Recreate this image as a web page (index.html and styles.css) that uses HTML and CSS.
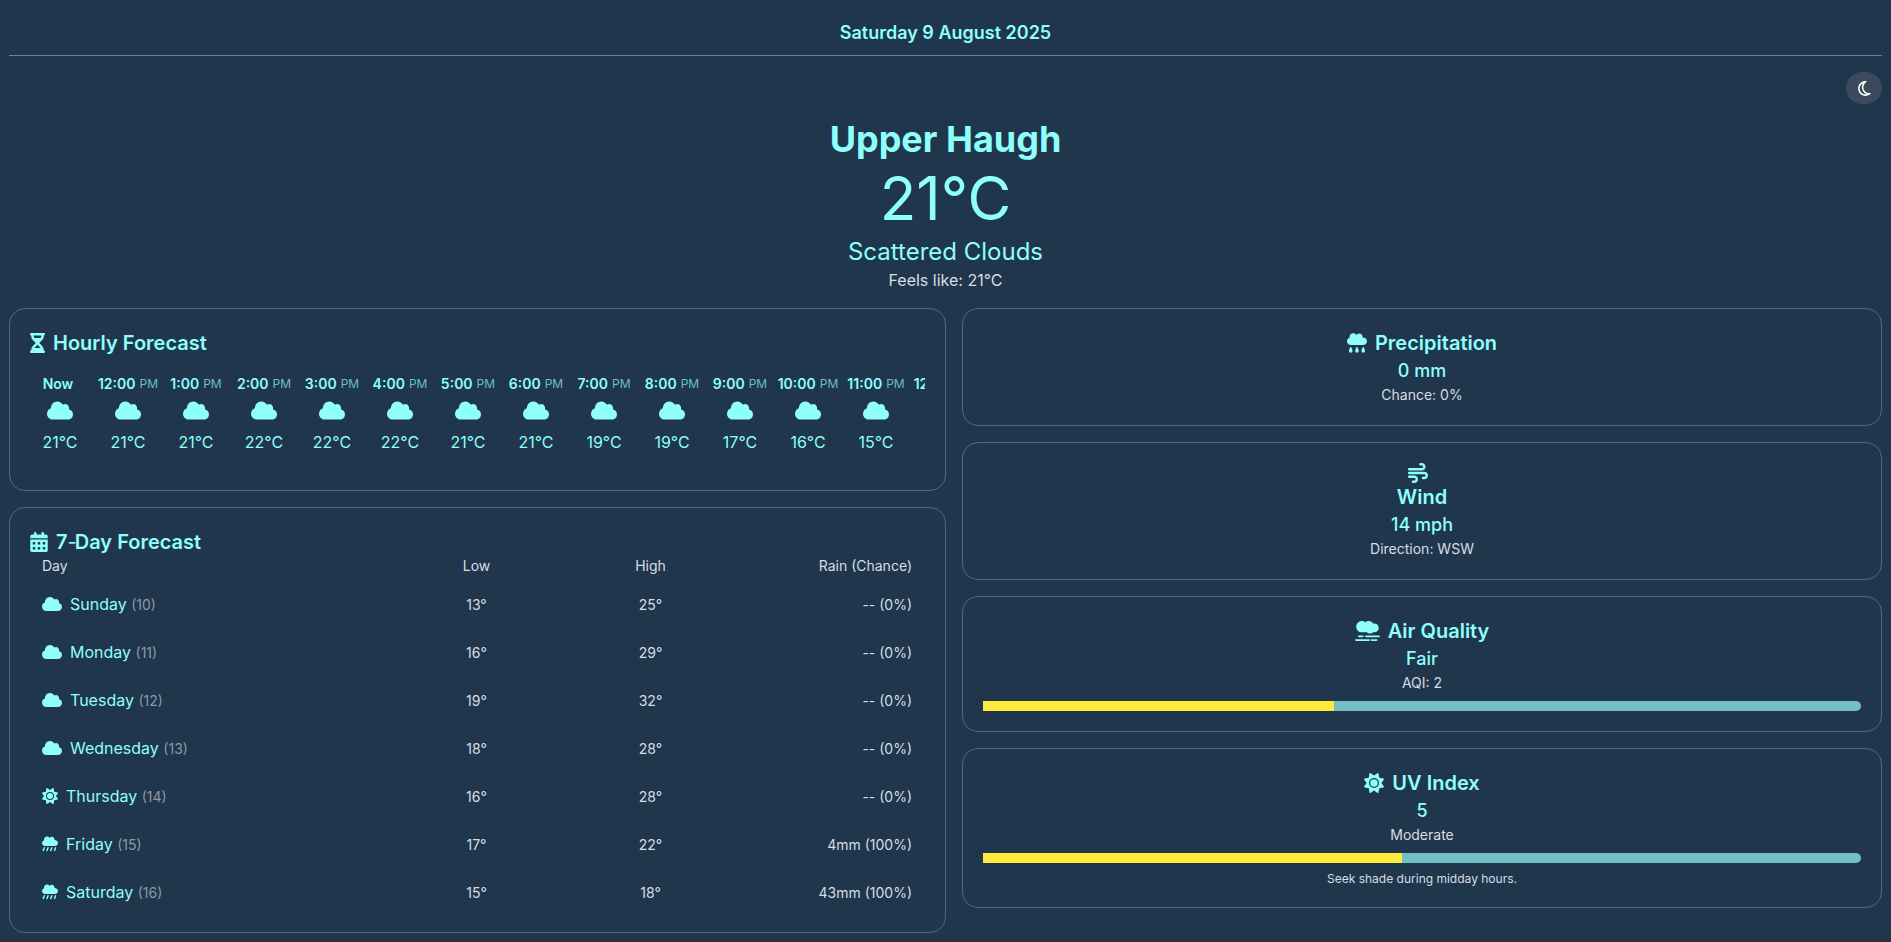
FILE: index.html
```html
<!DOCTYPE html>
<html lang="en">
<head>
<meta charset="utf-8">
<title>Weather</title>
<link rel="stylesheet" href="styles.css">
</head>
<body>
<svg class="defs" width="0" height="0" aria-hidden="true">
  <symbol id="i-cloud" viewBox="0 0 640 512"><path fill="currentColor" d="M0 336c0 79.500 64.500 144 144 144H512c70.700 0 128-57.300 128-128c0-61.900-44-113.600-102.400-125.400c4.100-10.700 6.400-22.400 6.400-34.600c0-53-43-96-96-96c-19.700 0-38.100 6-53.300 16.200C367 64.200 315.300 32 256 32C167.600 32 96 103.600 96 192c0 2.700 .1 5.400 .2 8.100C40.200 219.800 0 273.200 0 336z"/></symbol>
  <symbol id="i-sun" viewBox="0 0 512 512"><path fill="currentColor" d="M361.500 1.200c5 2.100 8.600 6.600 9.600 11.900L391 121l107.900 19.800c5.300 1 9.800 4.600 11.900 9.600s1.500 10.700-1.600 15.200L446.900 256l62.300 90.300c3.100 4.500 3.700 10.200 1.600 15.200s-6.600 8.600-11.900 9.600L391 391 371.100 498.900c-1 5.300-4.600 9.800-9.600 11.900s-10.700 1.500-15.200-1.600L256 446.900l-90.300 62.300c-4.500 3.100-10.200 3.700-15.200 1.600s-8.600-6.600-9.600-11.900L121 391 13.100 371.100c-5.300-1-9.800-4.600-11.900-9.600s-1.500-10.700 1.600-15.200L65.100 256 2.800 165.700c-3.100-4.500-3.700-10.200-1.600-15.200s6.600-8.600 11.900-9.600L121 121 140.900 13.100c1-5.300 4.600-9.800 9.600-11.900s10.700-1.500 15.200 1.600L256 65.100 346.300 2.800c4.500-3.100 10.200-3.700 15.200-1.600zM160 256a96 96 0 1 1 192 0 96 96 0 1 1 -192 0zm224 0a128 128 0 1 0 -256 0 128 128 0 1 0 256 0z"/></symbol>
  <symbol id="i-rain" viewBox="0 0 512 512"><path fill="currentColor" d="M96 320c-53 0-96-43-96-96c0-42.500 27.600-78.500 65.900-91.100C64.700 126.700 64 120.400 64 114c0-53 43-96 96-96c33.800 0 63.500 17.500 80.600 43.900C256.500 39.700 282.700 24 312 24c48.600 0 88 39.400 88 88c0 4.500-.3 8.900-1 13.200c2.300-.1 4.600-.2 7-.2c58.500 0 106 43 106 97.500S464.500 320 416 320H96zM81.500 353.700c12.100 4.500 18.300 18 13.800 30.200L62.500 471.700c-4.500 12.100-18 18.300-30.200 13.800s-18.300-18-13.800-30.200l32.800-87.800c4.500-12.100 18-18.300 30.200-13.800zm120 0c12.100 4.500 18.300 18 13.800 30.200l-32.800 87.800c-4.500 12.100-18 18.300-30.200 13.800s-18.300-18-13.800-30.200l32.800-87.800c4.500-12.100 18-18.300 30.200-13.800zm120 0c12.100 4.500 18.300 18 13.800 30.200l-32.800 87.800c-4.500 12.100-18 18.300-30.200 13.800s-18.300-18-13.800-30.200l32.800-87.800c4.500-12.100 18-18.300 30.200-13.800zm120 0c12.100 4.500 18.300 18 13.800 30.200l-32.800 87.800c-4.500 12.100-18 18.300-30.200 13.800s-18.300-18-13.800-30.200l32.800-87.800c4.500-12.100 18-18.300 30.200-13.800z"/></symbol>
  <symbol id="i-precip" viewBox="0 0 512 512"><path fill="currentColor" d="M96 310c-53 0-96-43-96-96c0-42.500 27.600-78.500 65.900-91.100C64.700 116.700 64 110.400 64 104c0-53 43-96 96-96c33.800 0 63.500 17.500 80.600 43.900C256.500 29.700 282.700 14 312 14c48.600 0 88 39.400 88 88c0 4.500-.3 8.900-1 13.200c2.300-.1 4.600-.2 7-.2c58.500 0 106 43 106 97.500S464.500 310 416 310H96zM50 462c0-30 36-108 46-108s46 78 46 108a46 46 0 0 1-92 0zm160 0c0-30 36-108 46-108s46 78 46 108a46 46 0 0 1-92 0zm160 0c0-30 36-108 46-108s46 78 46 108a46 46 0 0 1-92 0z"/></symbol>
  <symbol id="i-wind" viewBox="0 0 512 512"><path fill="currentColor" d="M288 32c0 17.700 14.300 32 32 32h32c17.700 0 32 14.300 32 32s-14.300 32-32 32H32c-17.700 0-32 14.300-32 32s14.300 32 32 32H352c53 0 96-43 96-96s-43-96-96-96H320c-17.700 0-32 14.300-32 32zm64 352c0 17.700 14.300 32 32 32h32c53 0 96-43 96-96s-43-96-96-96H32c-17.700 0-32 14.300-32 32s14.300 32 32 32H416c17.700 0 32 14.300 32 32s-14.300 32-32 32H384c-17.700 0-32 14.300-32 32zM128 512h32c53 0 96-43 96-96s-43-96-96-96H32c-17.700 0-32 14.300-32 32s14.300 32 32 32H160c17.700 0 32 14.300 32 32s-14.300 32-32 32H128c-17.700 0-32 14.300-32 32s14.300 32 32 32z"/></symbol>
  <symbol id="i-smog" viewBox="0 0 640 512"><path fill="currentColor" d="M32 144c0 79.500 64.500 144 144 144H299.300c22.600 19.900 52.200 32 84.700 32s62.100-12.100 84.700-32H496c61.900 0 112-50.100 112-112s-50.100-112-112-112c-10.700 0-21 1.500-30.800 4.300C443.800 27.700 401.100 0 352 0c-32.600 0-62.400 12.200-85.100 32.300C242.100 12.100 210.500 0 176 0C96.500 0 32 64.500 32 144zM616 368H280c-13.300 0-24 10.700-24 24s10.700 24 24 24H616c13.300 0 24-10.700 24-24s-10.700-24-24-24zm-64 96H424c-13.300 0-24 10.700-24 24s10.700 24 24 24H552c13.300 0 24-10.700 24-24s-10.700-24-24-24zm-192 0H24c-13.300 0-24 10.700-24 24s10.700 24 24 24H360c13.300 0 24-10.700 24-24s-10.700-24-24-24zM224 392c0-13.300-10.700-24-24-24H96c-13.300 0-24 10.700-24 24s10.700 24 24 24H200c13.300 0 24-10.700 24-24z"/></symbol>
  <symbol id="i-hourglass" viewBox="0 0 384 512"><path fill="currentColor" d="M32 0C14.300 0 0 14.300 0 32S14.300 64 32 64V75c0 42.400 16.900 83.100 46.900 113.100L146.700 256 78.900 323.900C48.900 353.900 32 394.600 32 437v11c-17.700 0-32 14.300-32 32s14.300 32 32 32H64 320h32c17.700 0 32-14.300 32-32s-14.300-32-32-32V437c0-42.400-16.900-83.100-46.900-113.100L237.300 256l67.900-67.900c30-30 46.900-70.700 46.900-113.100V64c17.700 0 32-14.300 32-32s-14.300-32-32-32H320 64 32zM96 75V64H288V75c0 19-5.600 37.400-16 53H112c-10.300-15.600-16-34-16-53zm16 309c3.500-5.300 7.600-10.300 12.100-14.900L192 301.300l67.900 67.900c4.600 4.600 8.600 9.600 12.100 14.900H112z"/></symbol>
  <symbol id="i-calendar" viewBox="0 0 448 512"><path fill="currentColor" d="M128 0c17.700 0 32 14.300 32 32V64H288V32c0-17.700 14.300-32 32-32s32 14.300 32 32V64h48c26.500 0 48 21.500 48 48v48H0V112C0 85.500 21.500 64 48 64H96V32c0-17.700 14.300-32 32-32zM0 192H448V464c0 26.500-21.500 48-48 48H48c-26.500 0-48-21.500-48-48V192zm64 80v32c0 8.800 7.200 16 16 16h32c8.800 0 16-7.200 16-16V272c0-8.800-7.200-16-16-16H80c-8.800 0-16 7.200-16 16zm128 0v32c0 8.800 7.200 16 16 16h32c8.800 0 16-7.200 16-16V272c0-8.800-7.200-16-16-16H208c-8.800 0-16 7.200-16 16zm144-16c-8.800 0-16 7.200-16 16v32c0 8.800 7.200 16 16 16h32c8.800 0 16-7.200 16-16V272c0-8.800-7.200-16-16-16H336zM64 400v32c0 8.800 7.200 16 16 16h32c8.800 0 16-7.200 16-16V400c0-8.800-7.200-16-16-16H80c-8.800 0-16 7.200-16 16zm144-16c-8.800 0-16 7.200-16 16v32c0 8.800 7.200 16 16 16h32c8.800 0 16-7.200 16-16V400c0-8.800-7.200-16-16-16H208zm112 16v32c0 8.800 7.200 16 16 16h32c8.800 0 16-7.200 16-16V400c0-8.800-7.200-16-16-16H336c-8.800 0-16 7.200-16 16z"/></symbol>
  <symbol id="i-moon" viewBox="0 0 384 512"><path fill="currentColor" d="M144.700 98.700c-21 34.100-33.100 74.300-33.100 117.300c0 98 62.800 181.200 150.100 211.800c-12.400 2.800-25.300 4.300-38.600 4.300C126.600 432 48 353.300 48 256c0-68.900 39.400-128.400 96.800-157.300zm62.100-66C91.100 41.200 0 137.900 0 256C0 379.700 100 480 223.500 480c47.800 0 92-15 128.300-40.600c1.900-1.300 3.700-2.700 5.500-4c4.800-3.600 9.400-7.400 13.900-11.400c2.700-2.400 5.300-4.800 7.900-7.300c5-4.900 6.300-12.500 3.100-18.700s-10.100-9.700-17-8.500c-3.700 .6-7.400 1.200-11.100 1.600c-5 .5-10.100 .9-15.300 1c-1.200 0-2.500 0-3.700 0c-.1 0-.2 0-.3 0c-96.800-.2-175.200-78.900-175.200-176c0-54.800 24.900-103.700 64.100-136c1-.9 2.100-1.700 3.200-2.600c4-3.200 8.200-6.200 12.500-9c3.100-2 6.300-4 9.600-5.800c6.100-3.500 9.200-10.500 7.700-17.300s-7.300-11.900-14.300-12.500c-3.600-.3-7.100-.5-10.700-.6c-2.700-.1-5.500-.1-8.200-.1c-3.300 0-6.500 .1-9.700 .2z"/></symbol>
</svg>

<header class="date-bar"><span>Saturday 9 August 2025</span></header>

<div class="toggle-row">
  <button class="toggle" type="button" aria-label="Toggle theme"><svg class="moon"><use href="#i-moon"/></svg></button>
</div>

<section class="hero">
  <h1>Upper Haugh</h1>
  <div class="temp">21°C</div>
  <div class="cond">Scattered Clouds</div>
  <div class="feels">Feels like: 21°C</div>
</section>

<main class="grid">
  <div class="col">
    <section class="card hourly">
      <h2 class="title"><svg class="ic ic-hour"><use href="#i-hourglass"/></svg>Hourly Forecast</h2>
      <div class="hours">
        <div class="hour"><div class="h-time">Now <small></small></div><svg class="h-ic"><use href="#i-cloud"/></svg><div class="h-temp">21°C</div></div>
        <div class="hour"><div class="h-time">12:00 <small>PM</small></div><svg class="h-ic"><use href="#i-cloud"/></svg><div class="h-temp">21°C</div></div>
        <div class="hour"><div class="h-time">1:00 <small>PM</small></div><svg class="h-ic"><use href="#i-cloud"/></svg><div class="h-temp">21°C</div></div>
        <div class="hour"><div class="h-time">2:00 <small>PM</small></div><svg class="h-ic"><use href="#i-cloud"/></svg><div class="h-temp">22°C</div></div>
        <div class="hour"><div class="h-time">3:00 <small>PM</small></div><svg class="h-ic"><use href="#i-cloud"/></svg><div class="h-temp">22°C</div></div>
        <div class="hour"><div class="h-time">4:00 <small>PM</small></div><svg class="h-ic"><use href="#i-cloud"/></svg><div class="h-temp">22°C</div></div>
        <div class="hour"><div class="h-time">5:00 <small>PM</small></div><svg class="h-ic"><use href="#i-cloud"/></svg><div class="h-temp">21°C</div></div>
        <div class="hour"><div class="h-time">6:00 <small>PM</small></div><svg class="h-ic"><use href="#i-cloud"/></svg><div class="h-temp">21°C</div></div>
        <div class="hour"><div class="h-time">7:00 <small>PM</small></div><svg class="h-ic"><use href="#i-cloud"/></svg><div class="h-temp">19°C</div></div>
        <div class="hour"><div class="h-time">8:00 <small>PM</small></div><svg class="h-ic"><use href="#i-cloud"/></svg><div class="h-temp">19°C</div></div>
        <div class="hour"><div class="h-time">9:00 <small>PM</small></div><svg class="h-ic"><use href="#i-cloud"/></svg><div class="h-temp">17°C</div></div>
        <div class="hour"><div class="h-time">10:00 <small>PM</small></div><svg class="h-ic"><use href="#i-cloud"/></svg><div class="h-temp">16°C</div></div>
        <div class="hour"><div class="h-time">11:00 <small>PM</small></div><svg class="h-ic"><use href="#i-cloud"/></svg><div class="h-temp">15°C</div></div>
        <div class="hour"><div class="h-time">12:00 <small>AM</small></div><svg class="h-ic"><use href="#i-cloud"/></svg><div class="h-temp">15°C</div></div>
      </div>
    </section>

    <section class="card daily">
      <h2 class="title"><svg class="ic ic-cal"><use href="#i-calendar"/></svg><span>7<span class="hy">-</span>Day Forecast</span></h2>
      <table class="days">
        <colgroup><col class="w-day"><col class="w-num"><col class="w-num"><col class="w-rain"></colgroup>
        <thead><tr><th class="c-day">Day</th><th>Low</th><th>High</th><th class="c-rain">Rain (Chance)</th></tr></thead>
        <tbody>
          <tr><td class="c-day"><svg class="d-ic d-cloud"><use href="#i-cloud"/></svg>Sunday <span class="dn">(10)</span></td><td>13°</td><td>25°</td><td class="c-rain">-- (0%)</td></tr>
          <tr><td class="c-day"><svg class="d-ic d-cloud"><use href="#i-cloud"/></svg>Monday <span class="dn">(11)</span></td><td>16°</td><td>29°</td><td class="c-rain">-- (0%)</td></tr>
          <tr><td class="c-day"><svg class="d-ic d-cloud"><use href="#i-cloud"/></svg>Tuesday <span class="dn">(12)</span></td><td>19°</td><td>32°</td><td class="c-rain">-- (0%)</td></tr>
          <tr><td class="c-day"><svg class="d-ic d-cloud"><use href="#i-cloud"/></svg>Wednesday <span class="dn">(13)</span></td><td>18°</td><td>28°</td><td class="c-rain">-- (0%)</td></tr>
          <tr><td class="c-day"><svg class="d-ic"><use href="#i-sun"/></svg>Thursday <span class="dn">(14)</span></td><td>16°</td><td>28°</td><td class="c-rain">-- (0%)</td></tr>
          <tr><td class="c-day"><svg class="d-ic"><use href="#i-rain"/></svg>Friday <span class="dn">(15)</span></td><td>17°</td><td>22°</td><td class="c-rain">4mm (100%)</td></tr>
          <tr><td class="c-day"><svg class="d-ic"><use href="#i-rain"/></svg>Saturday <span class="dn">(16)</span></td><td>15°</td><td>18°</td><td class="c-rain">43mm (100%)</td></tr>
        </tbody>
      </table>
    </section>
  </div>

  <div class="col">
    <section class="card stat stat-precip">
      <h2 class="title"><svg class="ic ic-sq"><use href="#i-precip"/></svg>Precipitation</h2>
      <div class="val">0 mm</div>
      <div class="sub">Chance: 0%</div>
    </section>
    <section class="card stat stat-wind">
      <div class="icon-row"><svg class="ic ic-sq"><use href="#i-wind"/></svg></div>
      <h2 class="title">Wind</h2>
      <div class="val">14 mph</div>
      <div class="sub">Direction: WSW</div>
    </section>
    <section class="card stat stat-air">
      <h2 class="title"><svg class="ic ic-wide"><use href="#i-smog"/></svg>Air Quality</h2>
      <div class="val">Fair</div>
      <div class="sub">AQI: 2</div>
      <div class="bar"><div class="fill" style="width:40%"></div></div>
    </section>
    <section class="card stat stat-uv">
      <h2 class="title"><svg class="ic ic-sq"><use href="#i-sun"/></svg>UV Index</h2>
      <div class="val">5</div>
      <div class="sub">Moderate</div>
      <div class="bar"><div class="fill" style="width:47.7%"></div></div>
      <div class="tip">Seek shade during midday hours.</div>
    </section>
  </div>
</main>
</body>
</html>
```
FILE: styles.css
```css
* { box-sizing: border-box; }
html { background: #33312f; height: 942px; overflow: hidden; }
body {
  margin: 0;
  padding: 0 9px;
  height: 940px;
  overflow: hidden;
  background: #1f364d;
  color: #8efffb;
  font-family: Inter, "Liberation Sans", sans-serif;
}
.defs { position: absolute; }
.date-bar {
  height: 56px;
  padding-top: 22px;
  text-align: center;
  font-size: 18px;
  line-height: 22px;
  font-weight: 600;
  border-bottom: 1px solid #6f8294;
}
.toggle-row { display: flex; justify-content: flex-end; padding-top: 16px; height: 61px; }
.toggle {
  width: 36px;
  height: 32px;
  border: 0;
  border-radius: 16px;
  background: #3a4a5c;
  color: #fff;
  padding: 0;
  display: flex;
  align-items: center;
  justify-content: center;
}
.moon { width: 13px; height: 17px; }
.hero { text-align: center; height: 191px; }
.hero h1 { margin: 0 0 3px; font-size: 36px; line-height: 44px; font-weight: 700; }
.temp { font-size: 60px; line-height: 68px; font-weight: 400; }
.cond { font-size: 24px; line-height: 32px; margin-top: 4px; }
.feels { font-size: 16px; line-height: 24px; color: #d8dde2; }
.grid { display: grid; grid-template-columns: 937px 920px; column-gap: 16px; }
.col { display: flex; flex-direction: column; gap: 16px; }
.card {
  border: 1px solid #416f80;
  border-radius: 16px;
  padding: 20px;
}
.title {
  margin: 0;
  font-size: 20px;
  line-height: 28px;
  font-weight: 600;
  display: flex;
  align-items: center;
}
.hy { font-weight: 400; letter-spacing: -2px; }
.ic { height: 20px; margin-right: 8px; flex: none; }
.ic-hour { width: 15px; }
.ic-cal { width: 18px; }
.ic-sq { width: 20px; }
.ic-wide { width: 25px; }
.icon-row { display: flex; justify-content: center; height: 20px; }
.hourly { height: 183px; }
.hours { display: flex; gap: 8px; overflow: hidden; margin-top: 17px; width: 895px; }
.hour { flex: none; width: 60px; text-align: center; }
.h-time { font-size: 14px; line-height: 20px; font-weight: 600; white-space: nowrap; margin-bottom: 6px; display: flex; justify-content: center; gap: 4px; }
.h-time small { font-size: 12px; font-weight: 400; color: #6bbfc4; }
.h-ic { width: 26px; height: 21px; display: block; margin: 0 auto 9px; }
.h-temp { font-size: 16px; line-height: 24px; font-weight: 400; }
.daily { height: 426px; padding-bottom: 0; }
.days { width: 895px; table-layout: fixed; border-collapse: collapse; font-size: 14px; }
.w-day { width: 360px; }
.w-num { width: 174px; }
.w-rain { width: 187px; }
.days th { font-weight: 400; color: #d8dde2; line-height: 20px; padding: 0 13px 4px 12px; height: 24px; vertical-align: top; }
.days td { color: #d8dde2; height: 48px; padding: 0 13px 0 12px; text-align: center; }
.days .c-day { text-align: left; color: #8efffb; font-size: 16px; white-space: nowrap; }
.days th.c-day { color: #d8dde2; font-size: 14px; }
.days .c-rain { text-align: right; }
.dn { color: #8d99a5; font-size: 14px; }
.d-ic { width: 16px; height: 16px; margin-right: 8px; vertical-align: -2px; }
.d-cloud { width: 20px; }
.stat { text-align: center; }
.stat .title { justify-content: center; }
.val { font-size: 18px; line-height: 28px; font-weight: 500; }
.sub { font-size: 14px; line-height: 20px; color: #d8dde2; }
.stat-precip { height: 118px; }
.stat-wind { height: 138px; }
.stat-air { height: 136px; }
.stat-uv { height: 160px; }
.bar { height: 10px; background: #72bfc4; border-radius: 0 5px 5px 0; overflow: hidden; margin-top: 8px; }
.fill { height: 100%; background: #ffe93b; }
.tip { font-size: 12px; line-height: 16px; color: #d8dde2; margin-top: 8px; }
```
